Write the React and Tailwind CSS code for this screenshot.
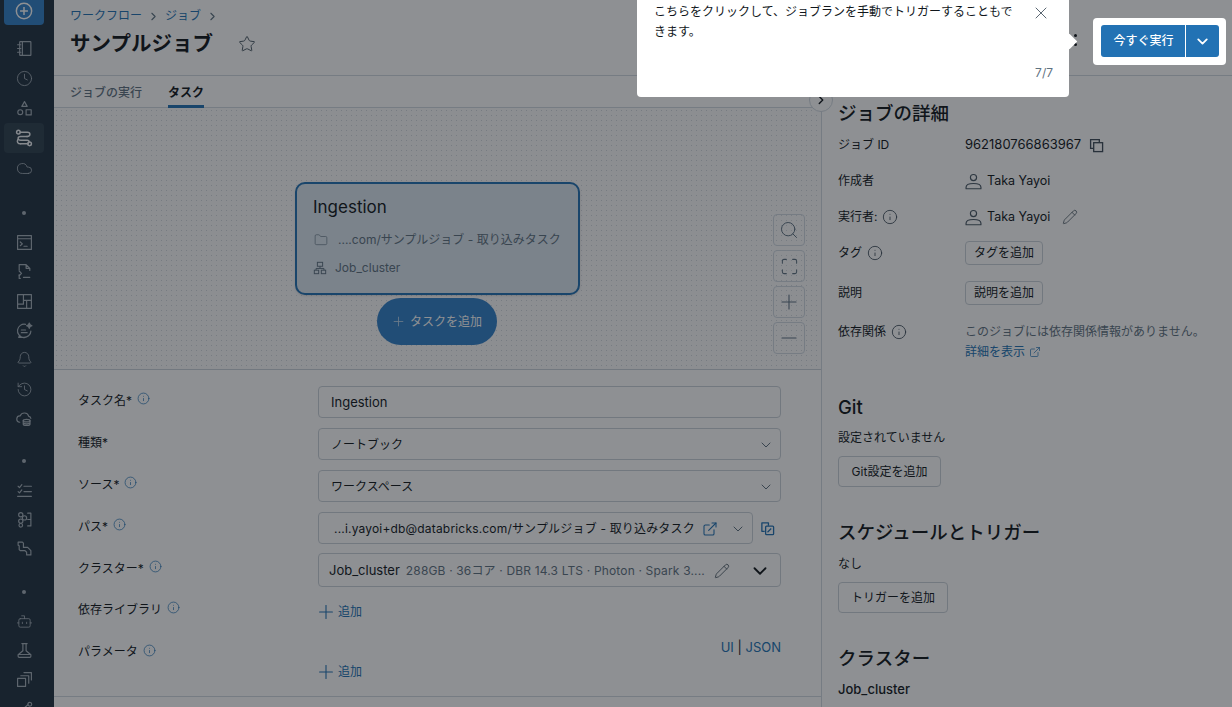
import React from 'react';
import {
  Bell,
  Bot,
  ChevronDown,
  ChevronRight,
  Clock,
  Cloud,
  ExternalLink,
  Folder,
  History,
  Info,
  Maximize,
  Minus,
  Pencil,
  Plus,
  Search,
  Star,
  X,
} from 'lucide-react';

const FONT = { fontFamily: 'Inter, "Noto Sans CJK JP", sans-serif' };

function Svg({ children }) {
  return (
    <svg width="17" height="17" viewBox="0 0 16 16" fill="none" stroke="currentColor" strokeWidth="1.1" strokeLinecap="round" strokeLinejoin="round">
      {children}
    </svg>
  );
}

const NotebookIcon = () => (
  <Svg>
    <rect x="3.5" y="1.5" width="10.5" height="13" rx="0.5" />
    <path d="M6 1.5v13M1.5 4.5h3M1.5 8h3M1.5 11.5h3" />
  </Svg>
);
const ShapesIcon = () => (
  <Svg>
    <path d="M8 1.5l2.5 4.5h-5z" />
    <circle cx="4" cy="11.5" r="2.3" />
    <rect x="9.5" y="9.2" width="4.8" height="4.8" />
  </Svg>
);
const JobsIcon = () => (
  <svg width="18" height="18" viewBox="0 0 16 16" fill="none" stroke="currentColor" strokeWidth="1.3" strokeLinecap="round">
    <circle cx="3" cy="2.8" r="1.6" />
    <circle cx="13" cy="13.2" r="1.6" />
    <path d="M4.6 2.8H11c3 0 3 3.6 0 3.8H5c-3 0-3 3.4 0 3.4h6c2 0 2 1.6.4 3.2" />
    <path d="M5 13.2h6.4M11 6.6h-.5" />
    <path d="M2.4 9.5c-.8 2 0 3.7 2.6 3.7" />
  </svg>
);
const TerminalIcon = () => (
  <Svg>
    <rect x="1.5" y="1.5" width="13" height="13" />
    <path d="M1.5 4.5h13M4 7.5l2 1.8L4 11M7.5 11.5h3" />
  </Svg>
);
const FileCodeIcon = () => (
  <Svg>
    <path d="M13 7V5L9.5 1.5H3v5M3 11v3.5h1M9.5 1.5V5H13" />
    <path d="M3 7.5l2.2 2.2L3 12M7 13.5h6" />
  </Svg>
);
const DashboardIcon = () => (
  <Svg>
    <rect x="1.5" y="1.5" width="13" height="13" />
    <path d="M7 1.5v9M1.5 10.5H7M7 7h7.5M10 7v7.5" />
  </Svg>
);
const GenieIcon = () => (
  <Svg>
    <path d="M9 2.2A6.3 6.3 0 1 0 14 8.6c0 3-2.8 5.8-6.5 5.8H2.5l1.2-2" />
    <path d="M5 7.5h4M5 10h5.5" />
    <path d="M12.5 1l.8 1.7 1.7.8-1.7.8-.8 1.7-.8-1.7-1.7-.8 1.7-.8z" fill="currentColor" />
  </Svg>
);
const CloudDbIcon = () => (
  <Svg>
    <path d="M3.5 11.5A3 3 0 0 1 4 5.5a4.2 4.2 0 0 1 8 .5 2.5 2.5 0 0 1 2 2" />
    <ellipse cx="10" cy="10" rx="3.2" ry="1.2" />
    <path d="M6.8 10v3.3c0 .7 1.4 1.2 3.2 1.2s3.2-.5 3.2-1.2V10M6.8 11.8c0 .7 1.4 1.2 3.2 1.2s3.2-.5 3.2-1.2" />
  </Svg>
);
const ChecksIcon = () => (
  <Svg>
    <path d="M2 4l1.3 1.3L5.5 2.5M2 9l1.3 1.3L5.5 7.5M1.5 13.5h13M7.5 4h7M7.5 9h7" />
  </Svg>
);
const FeatureIcon = () => (
  <Svg>
    <circle cx="4.5" cy="3.5" r="2" />
    <circle cx="8" cy="6.5" r="2" />
    <circle cx="4.5" cy="9.5" r="2" />
    <circle cx="4.5" cy="13.5" r="1.7" />
    <path d="M11 2h3v12h-3M11 8h3" />
  </Svg>
);
const PipeIcon = () => (
  <Svg>
    <path d="M2 2h4l1 1v4h4l3 3v4h-4v-2.5L8.5 10H4l-1-1V5.5L2 5z" />
  </Svg>
);
const BeakerIcon = () => (
  <Svg>
    <path d="M5.5 1.5h5M6.5 1.5v6.7L2 12v1.5c0 .5.5 1 1 1h10c.5 0 1-.5 1-1V12L9.5 8.2V1.5M2 11.8h12" />
  </Svg>
);
const StackIcon = () => (
  <Svg>
    <rect x="1.5" y="7" width="7.5" height="7.5" />
    <path d="M4.5 4.5H12v7M7.5 1.5h7v7" />
  </Svg>
);
const NodesIcon = () => (
  <Svg>
    <circle cx="3" cy="10" r="1.8" />
    <circle cx="13" cy="4" r="1.8" />
    <circle cx="13" cy="13" r="1.8" />
    <path d="M4.8 10l6.4-5.5M4.8 10.5l6.4 2" />
  </Svg>
);
const CopyPairIcon = () => (
  <svg width="15" height="15" viewBox="0 0 16 16" fill="none" stroke="currentColor" strokeWidth="1.4" strokeLinejoin="round">
    <path d="M5 11H2V2h7v3" />
    <rect x="6" y="5.5" width="8.5" height="9" rx="1" />
    <path d="M8 12l4-4" />
  </svg>
);
const CopyIcon = () => (
  <svg width="15" height="15" viewBox="0 0 16 16" fill="none" stroke="currentColor" strokeWidth="1.4" className="ml-[8px] text-[#3f4d59]">
    <path d="M5 11H1.7V1.7H11V5" />
    <rect x="5" y="5" width="9.5" height="9.5" />
  </svg>
);
const UserIcon = () => (
  <svg width="17" height="17" viewBox="0 0 16 16" fill="none" stroke="currentColor" strokeWidth="1.1" strokeLinejoin="round" className="mr-[5px] text-[#4a5965]">
    <circle cx="8" cy="4.3" r="2.9" />
    <path d="M1 14.8v-1.3c0-2.3 3-3.6 7-3.6s7 1.3 7 3.6v1.3z" />
  </svg>
);
const ClusterIcon = () => (
  <svg width="14" height="14" viewBox="0 0 16 16" fill="none" stroke="currentColor" strokeWidth="1.1" className="mr-[8px]">
    <rect x="5" y="1.5" width="6" height="4.5" />
    <path d="M8 6v2.5M3.5 10.5v-2h9v2" />
    <rect x="1.5" y="10.5" width="5" height="4" />
    <rect x="9.5" y="10.5" width="5" height="4" />
  </svg>
);

const lucideSide = { size: 17, strokeWidth: 1.2 };

function RailItem({ icon, h = 'h-[30px]', active }) {
  return (
    <div className={`${h} flex items-center justify-center ml-1 w-[40px] rounded ${active ? 'bg-[#2e404f] text-[#f0f3f5]' : ''}`}>{icon}</div>
  );
}

function RailDot({ className }) {
  return (
    <div className={`h-[30px] w-[48px] flex items-center justify-center ${className}`}>
      <div className="w-[4px] h-[4px] rounded-full bg-[#a5b0ba]" />
    </div>
  );
}

function Sidebar() {
  return (
    <aside className="w-[54px] h-full shrink-0 bg-[#213240] text-[#a5b0ba] overflow-hidden">
      <div className="h-[25px] ml-1 w-[40px] mb-2 rounded-b flex items-start justify-center bg-[#3280c8] text-white">
        <svg width="18" height="18" viewBox="0 0 16 16" fill="none" stroke="currentColor" strokeWidth="1.3" className="mt-[2px]">
          <circle cx="8" cy="8" r="6.8" />
          <path d="M8 4.5v7M4.5 8h7" />
        </svg>
      </div>
      <RailItem icon={<NotebookIcon />} />
      <RailItem icon={<Clock {...lucideSide} />} />
      <RailItem icon={<ShapesIcon />} />
      <RailItem icon={<JobsIcon />} active />
      <RailItem icon={<Cloud {...lucideSide} />} />
      <RailDot className="mt-[15px]" />
      <RailItem h="h-[29.3px]" icon={<TerminalIcon />} />
      <RailItem h="h-[29.3px]" icon={<FileCodeIcon />} />
      <RailItem h="h-[29.3px]" icon={<DashboardIcon />} />
      <RailItem h="h-[29.3px]" icon={<GenieIcon />} />
      <RailItem h="h-[29.3px]" icon={<Bell {...lucideSide} />} />
      <RailItem h="h-[29.3px]" icon={<History {...lucideSide} />} />
      <RailItem h="h-[29.3px]" icon={<CloudDbIcon />} />
      <RailDot className="mt-[13px]" />
      <RailItem h="h-[29px]" icon={<ChecksIcon />} />
      <RailItem h="h-[29px]" icon={<FeatureIcon />} />
      <RailItem h="h-[29px]" icon={<PipeIcon />} />
      <RailDot className="mt-[14px]" />
      <RailItem h="h-[29px]" icon={<Bot {...lucideSide} />} />
      <RailItem h="h-[29px]" icon={<BeakerIcon />} />
      <RailItem h="h-[29px]" icon={<StackIcon />} />
      <RailItem h="h-[29px]" icon={<NodesIcon />} />
    </aside>
  );
}

function FormInfo() {
  return <Info size={13} strokeWidth={1.3} className="text-[#2272b4] ml-[5px] -mt-[4px] shrink-0" />;
}

function FormRow({ label, info, h = 'h-[32px]', mb = 'mb-[10px]', children }) {
  return (
    <div className={`flex ${mb}`}>
      <div className={`w-[240px] ${h} pb-[3px] flex items-center text-[12px] text-[#11171c]`}>
        {label}
        {info && <FormInfo />}
      </div>
      {children}
    </div>
  );
}

function Field({ children, width = 'w-[463px]', h = 'h-[32px]', pl = 'pl-3', pr = 'pr-[6px]' }) {
  return (
    <div className={`${width} ${h} ${pl} ${pr} pt-[1px] bg-white border border-[#cbd2d9] rounded flex items-center text-[12px] text-[#11171c]`}>
      {children}
    </div>
  );
}

function AddLink() {
  return (
    <div className="flex items-center text-[12px] text-[#2272b4]">
      <Plus size={22} strokeWidth={1.2} className="-ml-[3px] mr-[1px]" />
      追加
    </div>
  );
}

function ZoomButton({ children }) {
  return <div className="w-[32px] h-[32px] border border-[#d1d9e1] rounded flex items-center justify-center text-[#5f7281]">{children}</div>;
}

function Canvas() {
  return (
    <div className="relative h-[262px] border-b border-[#cbd2d9] bg-[#fbfbfc] bg-[radial-gradient(#d4d9df_0.8px,transparent_0.8px)] bg-[size:5px_5px] flex flex-col items-center pt-[74px] pr-[2px]">
      <div className="w-[285px] h-[113px] ml-[2px] bg-[#dbe6f0] border-2 border-[#2272b4] rounded-[10px] pl-[16px] pt-[10px] shadow-sm">
        <div className="text-[17px] leading-[26px] text-[#11171c]">Ingestion</div>
        <div className="flex items-center mt-[11px] text-[12px] text-[#5f7281] whitespace-nowrap">
          <Folder size={14} strokeWidth={1.1} className="mr-[10px] ml-[1px]" />
          ....com/サンプルジョブ - 取り込みタスク
        </div>
        <div className="flex items-center mt-[10px] text-[12px] text-[#5f7281]">
          <ClusterIcon />
          Job_cluster
        </div>
      </div>
      <div className="mt-[3px] w-[120px] h-[47px] rounded-full bg-[#3280c8] flex items-center justify-center text-white text-[12px]">
        <Plus size={15} strokeWidth={1.3} className="mr-[4px] opacity-70" />
        タスクを追加
      </div>
      <div className="absolute left-[719px] top-[106px] flex flex-col gap-1">
        <ZoomButton><Search size={20} strokeWidth={1.2} /></ZoomButton>
        <ZoomButton><Maximize size={19} strokeWidth={1.3} /></ZoomButton>
        <ZoomButton><Plus size={24} strokeWidth={1.1} /></ZoomButton>
        <ZoomButton><Minus size={24} strokeWidth={1.1} /></ZoomButton>
      </div>
    </div>
  );
}

function TaskForm() {
  return (
    <div className="pl-[24px] pt-[16px] h-[327px] border-b border-[#d1d9e1]">
      <FormRow label="タスク名*" info>
        <Field><span className="text-[13px]">Ingestion</span></Field>
      </FormRow>
      <FormRow label="種類*">
        <Field>
          <span className="flex-1">ノートブック</span>
          <ChevronDown size={16} strokeWidth={1.5} className="text-[#5f7281]" />
        </Field>
      </FormRow>
      <FormRow label="ソース*" info>
        <Field>
          <span className="flex-1">ワークスペース</span>
          <ChevronDown size={16} strokeWidth={1.5} className="text-[#5f7281]" />
        </Field>
      </FormRow>
      <FormRow label="パス*" info mb="mb-[9px]">
        <Field width="w-[435px]" pl="pl-[15px]">
          <span className="flex-1 whitespace-nowrap tracking-[0.18px]">...i.yayoi+db@databricks.com/サンプルジョブ - 取り込みタスク</span>
          <ExternalLink size={16} strokeWidth={1.6} className="text-[#2272b4] mr-[12px]" />
          <ChevronDown size={16} strokeWidth={1.5} className="text-[#5f7281]" />
        </Field>
        <div className="w-[28px] flex items-center justify-end pr-[6px] text-[#2272b4]">
          <CopyPairIcon />
        </div>
      </FormRow>
      <FormRow label="クラスター*" info h="h-[34px]" mb="mb-[12px]">
        <Field h="h-[34px]" pl="pl-[10px]" pr="pr-[9px]">
          <span className="text-[13px]">Job_cluster</span>
          <span className="ml-[6px] flex-1 text-[#5f7281] whitespace-nowrap tracking-[0.16px]">288GB · 36コア · DBR 14.3 LTS · Photon · Spark 3....</span>
          <Pencil size={16} strokeWidth={1.3} className="text-[#4a5965] mr-[19px]" />
          <ChevronDown size={22} strokeWidth={2} className="text-[#11171c]" />
        </Field>
      </FormRow>
      <FormRow label="依存ライブラリ" info h="h-[24px]" mb="mb-[16px]">
        <div className="pt-[2px]"><AddLink /></div>
      </FormRow>
      <div className="flex">
        <div className="w-[240px] h-[26px] flex items-center text-[12px] text-[#11171c]">
          パラメータ
          <FormInfo />
        </div>
        <div className="w-[463px]">
          <div className="text-right text-[13px] leading-[16px] text-[#2272b4]">
            UI <span className="text-[#11171c]">|</span> JSON
          </div>
          <div className="mt-[6px]"><AddLink /></div>
        </div>
      </div>
    </div>
  );
}

function DetailRow({ label, info, h = 'h-[36px]', children }) {
  return (
    <div className={`flex items-center ${h} text-[12px] text-[#11171c]`}>
      <div className="w-[127px] flex items-center shrink-0">
        {label}
        {info && <Info size={16} strokeWidth={1.3} className="ml-[5px] text-[#3f4d59]" />}
      </div>
      {children}
    </div>
  );
}

function OutlineButton({ children, className = '' }) {
  return (
    <div className={`inline-flex items-center justify-center border border-[#cbd2d9] rounded bg-white text-[12px] text-[#11171c] ${className}`}>
      {children}
    </div>
  );
}

function SectionTitle({ children, className = '' }) {
  return <h2 className={`text-[18.5px] leading-[26px] font-medium text-[#11171c] ${className}`}>{children}</h2>;
}

function DetailsPanel() {
  return (
    <div className="w-[411px] shrink-0 border-l border-[#d1d9e1] pl-[16px] pt-[24px]">
      <SectionTitle>ジョブの詳細</SectionTitle>
      <div className="mt-[1px]">
        <DetailRow label="ジョブ ID">
          <span className="text-[13px]">962180766863967</span>
          <CopyIcon />
        </DetailRow>
        <DetailRow label="作成者">
          <UserIcon />
          <span className="text-[12.5px]">Taka Yayoi</span>
        </DetailRow>
        <DetailRow label="実行者:" info>
          <UserIcon />
          <span className="text-[12.5px]">Taka Yayoi</span>
          <Pencil size={16} strokeWidth={1.2} className="ml-[12px] text-[#4a5965]" />
        </DetailRow>
        <DetailRow label="タグ" info h="h-[36px]">
          <OutlineButton className="w-[78px] h-[24px]">タグを追加</OutlineButton>
        </DetailRow>
        <DetailRow label="説明" h="h-[44px]">
          <OutlineButton className="w-[78px] h-[24px]">説明を追加</OutlineButton>
        </DetailRow>
      </div>
      <div className="flex items-start text-[12px] text-[#11171c] mt-[7px]">
        <div className="w-[127px] h-[20px] flex items-center">
          依存関係
          <Info size={16} strokeWidth={1.3} className="ml-[5px] text-[#3f4d59]" />
        </div>
        <div className="leading-[20px]">
          <div className="text-[#5f7281]">このジョブには依存関係情報がありません。</div>
          <div className="flex items-center text-[#2272b4]">
            詳細を表示
            <ExternalLink size={12} strokeWidth={1.4} className="ml-[4px]" />
          </div>
        </div>
      </div>
      <SectionTitle className="mt-[32px]">Git</SectionTitle>
      <div className="mt-[8px] text-[12px] leading-[20px] text-[#11171c]">設定されていません</div>
      <OutlineButton className="mt-[8px] w-[103px] h-[31px]">Git設定を追加</OutlineButton>
      <SectionTitle className="mt-[32px]">スケジュールとトリガー</SectionTitle>
      <div className="mt-[9px] text-[12px] leading-[20px] text-[#11171c]">なし</div>
      <OutlineButton className="mt-[8px] w-[110px] h-[31px]">トリガーを追加</OutlineButton>
      <SectionTitle className="mt-[32px]">クラスター</SectionTitle>
      <div className="mt-[8px] text-[13px] leading-[20px] font-medium text-[#11171c]">Job_cluster</div>
    </div>
  );
}

function Tour() {
  return (
    <>
      <div className="absolute inset-0 z-20 bg-[#0f131a]/[0.47]" />
      {/* tour popover */}
      <div className="absolute z-20 left-[637px] top-0 w-[432px] h-[97px] bg-white rounded-b text-[12px] text-[#11171c]">
        <p className="absolute left-[17px] top-[2px] w-[362px] leading-[20px]">
          こちらをクリックして、ジョブランを手動でトリガーすることもできます。
        </p>
        <X size={20} strokeWidth={1.1} className="absolute left-[394px] top-[3px] text-[#4a5965]" />
        <span className="absolute right-[16px] top-[64px] text-[#5f7281]">7/7</span>
        <div className="absolute left-[427px] top-[36px] w-[11px] h-[11px] rotate-45 bg-white" />
      </div>
      {/* highlighted run button */}
      <div className="absolute z-20 left-[1093px] top-[18px] w-[133px] h-[47px] bg-white rounded-sm p-[8px] pt-[7px]">
        <div className="h-[32px] w-[118px] flex rounded-[3px] bg-[#2272b4] text-white text-[12px] font-medium">
          <span className="w-[85px] pl-[1px] flex items-center justify-center border-r border-white">今すぐ実行</span>
          <span className="flex-1 flex items-center justify-center">
            <ChevronDown size={17} strokeWidth={2.6} />
          </span>
        </div>
      </div>
    </>
  );
}

export default function App() {
  return (
    <div className="relative w-screen h-screen overflow-hidden flex bg-white" style={FONT}>
      <Sidebar />
      <main className="flex-1 min-w-0 flex flex-col">
        <header className="h-[76px] shrink-0 border-b border-[#d1d9e1] pl-[16px] pt-[6px] flex flex-col">
          <div className="flex items-center h-[20px] text-[12px] text-[#2272b4]">
            ワークフロー
            <ChevronRight size={13} className="mx-[5px] text-[#5f7281]" />
            ジョブ
            <ChevronRight size={13} className="mx-[5px] text-[#5f7281]" />
          </div>
          <div className="flex items-center mt-[3px] h-[30px]">
            <h1 className="text-[20.5px] font-semibold text-[#11171c]">サンプルジョブ</h1>
            <Star size={18} strokeWidth={1.3} className="ml-[25px] text-[#4a5965]" />
          </div>
          <div className="absolute left-[1074px] top-[34px] flex flex-col gap-[6px]">
            <div className="w-[3px] h-[3px] rounded-full bg-[#11171c]" />
            <div className="w-[3px] h-[3px] rounded-full bg-[#11171c]" />
          </div>
        </header>
        <div className="flex flex-1 min-h-0">
          <div className="flex-1 min-w-0 relative">
            <div className="h-[32px] border-b border-[#d1d9e1] pl-[16px] flex gap-[26px] text-[12px]">
              <span className="h-[32px] pt-[1px] flex items-center text-[#5f7281] font-medium">ジョブの実行</span>
              <span className="h-[32px] flex items-center text-[#11171c] font-semibold border-b-[3px] border-[#2272b4] pt-[4px]">タスク</span>
            </div>
            <Canvas />
            <TaskForm />
            <div className="absolute right-[-12px] top-[12px] w-[24px] h-[24px] rounded-full bg-white border border-[#d1d9e1] flex items-center justify-center z-10">
              <ChevronRight size={14} strokeWidth={2.4} className="text-[#11171c]" />
            </div>
          </div>
          <DetailsPanel />
        </div>
      </main>
      <Tour />
    </div>
  );
}
